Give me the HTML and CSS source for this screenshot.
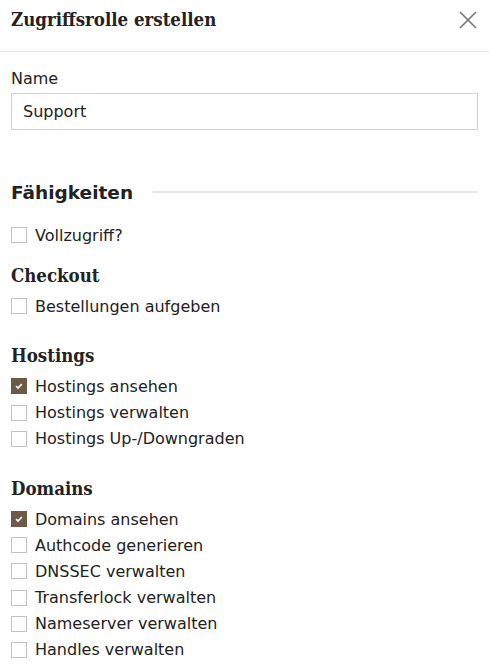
FILE: index.html
```html
<!DOCTYPE html>
<html lang="de">
<head>
<meta charset="utf-8">
<link rel="stylesheet" href="styles.css">
</head>
<body>
<div class="modal">
  <header class="modal-header">
    <h1 class="modal-title">Zugriffsrolle erstellen</h1>
    <button class="close" aria-label="Schließen">
      <svg width="18" height="18" viewBox="0 0 18 18"><path d="M1 1L17 17M17 1L1 17" stroke="#777" stroke-width="1.7" fill="none"/></svg>
    </button>
  </header>
  <div class="modal-body">
    <label class="field-label">Name</label>
    <div class="input">Support</div>

    <div class="section-title"><span>Fähigkeiten</span><div class="rule"></div></div>
    <div class="list first">
      <div class="check"><span class="box"></span>Vollzugriff?</div>
    </div>

    <h2 class="group group-first">Checkout</h2>
    <div class="list">
      <div class="check"><span class="box"></span>Bestellungen aufgeben</div>
    </div>

    <h2 class="group">Hostings</h2>
    <div class="list">
      <div class="check"><span class="box on"><svg width="16" height="16" viewBox="0 0 16 16"><path d="M5 8.2L7 10L10.8 6.1" stroke="#fff" stroke-width="1.7" fill="none"/></svg></span>Hostings ansehen</div>
      <div class="check"><span class="box"></span>Hostings verwalten</div>
      <div class="check"><span class="box"></span>Hostings Up-/Downgraden</div>
    </div>

    <h2 class="group">Domains</h2>
    <div class="list">
      <div class="check"><span class="box on"><svg width="16" height="16" viewBox="0 0 16 16"><path d="M5 8.2L7 10L10.8 6.1" stroke="#fff" stroke-width="1.7" fill="none"/></svg></span>Domains ansehen</div>
      <div class="check"><span class="box"></span>Authcode generieren</div>
      <div class="check"><span class="box"></span>DNSSEC verwalten</div>
      <div class="check"><span class="box"></span>Transferlock verwalten</div>
      <div class="check"><span class="box"></span>Nameserver verwalten</div>
      <div class="check"><span class="box"></span>Handles verwalten</div>
    </div>
  </div>
</div>
</body>
</html>
```
FILE: styles.css
```css
* { box-sizing: border-box; }
html, body { margin: 0; padding: 0; background: #fff; }
body { font-family: "DejaVu Sans", "Open Sans", sans-serif; color: #222; font-size: 16px; }
.modal { width: 489px; }
.modal-header {
  height: 52px;
  border-bottom: 1px solid #e3e3e3;
  display: flex;
  align-items: flex-start;
  justify-content: space-between;
  padding: 0 11px 0 11px;
}
.modal-title {
  margin: 0;
  font-family: "DejaVu Serif", serif;
  font-stretch: condensed;
  font-weight: 700;
  font-size: 18.5px;
  line-height: 40px;
  color: #222;
}
.close { border: 0; background: none; padding: 0; width: 18px; height: 18px; margin: 11px 1px 0 0; display: flex; }
.modal-body { padding: 17px 11px 0 11px; }
.field-label { display: block; font-size: 16px; line-height: 20px; margin-bottom: 4px; }
.input {
  height: 37px;
  border: 1px solid #cfd2d6;
  padding: 0 11px;
  display: flex;
  align-items: center;
  font-size: 16px;
}
.section-title {
  display: flex;
  align-items: center;
  margin-top: 44px;
  height: 36px;
}
.section-title span { font-weight: 700; font-size: 18.5px; padding-right: 20px; }
.rule { flex: 1; height: 2px; background: #e8e8e8; }
.list { display: flex; flex-direction: column; }
.list.first { margin-top: 12px; }
.check { display: flex; align-items: center; height: 26.2px; font-size: 16px; }
.box {
  width: 16px; height: 16px;
  border: 1px solid #c2c2c2;
  background: #fff;
  margin-right: 8px;
  display: flex; align-items: center; justify-content: center;
  flex: none;
}
.box.on { background: #6c5a47; border-color: #6c5a47; }
.box svg { display: block; flex: none; }
.group {
  margin: 24px 0 4px 0;
  font-family: "DejaVu Serif", serif;
  font-stretch: condensed;
  font-weight: 700;
  font-size: 18.5px;
  line-height: 26px;
}
.group.group-first { margin-top: 15px; }
```
